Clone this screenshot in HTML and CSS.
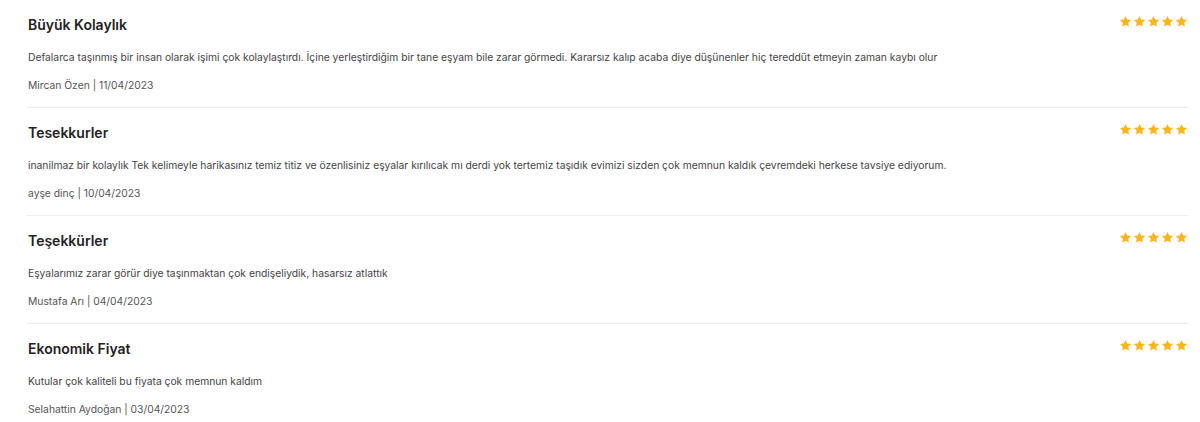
FILE: index.html
```html
<!DOCTYPE html>
<html lang="tr">

<head>
    <meta charset="UTF-8">
    <meta name="viewport" content="width=device-width, initial-scale=1.0">
    <title>Yorumlar</title>
    <link rel="stylesheet" href="styles.css">
</head>

<body>
    <div class="reviews">
        <div class="review">
            <div class="review-head">
                <h3>Büyük Kolaylık</h3>
                <div class="stars">
                    <svg viewBox="0 0 24 24"><path d="M12 1.8l3.1 6.6 7.2.9-5.3 5 1.4 7.1L12 17.9l-6.4 3.5 1.4-7.1-5.3-5 7.2-.9z"/></svg>
                    <svg viewBox="0 0 24 24"><path d="M12 1.8l3.1 6.6 7.2.9-5.3 5 1.4 7.1L12 17.9l-6.4 3.5 1.4-7.1-5.3-5 7.2-.9z"/></svg>
                    <svg viewBox="0 0 24 24"><path d="M12 1.8l3.1 6.6 7.2.9-5.3 5 1.4 7.1L12 17.9l-6.4 3.5 1.4-7.1-5.3-5 7.2-.9z"/></svg>
                    <svg viewBox="0 0 24 24"><path d="M12 1.8l3.1 6.6 7.2.9-5.3 5 1.4 7.1L12 17.9l-6.4 3.5 1.4-7.1-5.3-5 7.2-.9z"/></svg>
                    <svg viewBox="0 0 24 24"><path d="M12 1.8l3.1 6.6 7.2.9-5.3 5 1.4 7.1L12 17.9l-6.4 3.5 1.4-7.1-5.3-5 7.2-.9z"/></svg>
                </div>
            </div>
            <p class="review-text">Defalarca taşınmış bir insan olarak işimi çok kolaylaştırdı. İçine yerleştirdiğim bir tane eşyam bile zarar görmedi. Kararsız kalıp acaba diye düşünenler hiç tereddüt etmeyin zaman kaybı olur</p>
            <p class="review-meta">Mircan Özen | 11/04/2023</p>
        </div>

        <div class="review">
            <div class="review-head">
                <h3>Tesekkurler</h3>
                <div class="stars">
                    <svg viewBox="0 0 24 24"><path d="M12 1.8l3.1 6.6 7.2.9-5.3 5 1.4 7.1L12 17.9l-6.4 3.5 1.4-7.1-5.3-5 7.2-.9z"/></svg>
                    <svg viewBox="0 0 24 24"><path d="M12 1.8l3.1 6.6 7.2.9-5.3 5 1.4 7.1L12 17.9l-6.4 3.5 1.4-7.1-5.3-5 7.2-.9z"/></svg>
                    <svg viewBox="0 0 24 24"><path d="M12 1.8l3.1 6.6 7.2.9-5.3 5 1.4 7.1L12 17.9l-6.4 3.5 1.4-7.1-5.3-5 7.2-.9z"/></svg>
                    <svg viewBox="0 0 24 24"><path d="M12 1.8l3.1 6.6 7.2.9-5.3 5 1.4 7.1L12 17.9l-6.4 3.5 1.4-7.1-5.3-5 7.2-.9z"/></svg>
                    <svg viewBox="0 0 24 24"><path d="M12 1.8l3.1 6.6 7.2.9-5.3 5 1.4 7.1L12 17.9l-6.4 3.5 1.4-7.1-5.3-5 7.2-.9z"/></svg>
                </div>
            </div>
            <p class="review-text">inanilmaz bir kolaylık Tek kelimeyle harikasınız temiz titiz ve özenlisiniz eşyalar kırılıcak mı derdi yok tertemiz taşıdık evimizi sizden çok memnun kaldık çevremdeki herkese tavsiye ediyorum.</p>
            <p class="review-meta">ayşe dinç | 10/04/2023</p>
        </div>

        <div class="review">
            <div class="review-head">
                <h3>Teşekkürler</h3>
                <div class="stars">
                    <svg viewBox="0 0 24 24"><path d="M12 1.8l3.1 6.6 7.2.9-5.3 5 1.4 7.1L12 17.9l-6.4 3.5 1.4-7.1-5.3-5 7.2-.9z"/></svg>
                    <svg viewBox="0 0 24 24"><path d="M12 1.8l3.1 6.6 7.2.9-5.3 5 1.4 7.1L12 17.9l-6.4 3.5 1.4-7.1-5.3-5 7.2-.9z"/></svg>
                    <svg viewBox="0 0 24 24"><path d="M12 1.8l3.1 6.6 7.2.9-5.3 5 1.4 7.1L12 17.9l-6.4 3.5 1.4-7.1-5.3-5 7.2-.9z"/></svg>
                    <svg viewBox="0 0 24 24"><path d="M12 1.8l3.1 6.6 7.2.9-5.3 5 1.4 7.1L12 17.9l-6.4 3.5 1.4-7.1-5.3-5 7.2-.9z"/></svg>
                    <svg viewBox="0 0 24 24"><path d="M12 1.8l3.1 6.6 7.2.9-5.3 5 1.4 7.1L12 17.9l-6.4 3.5 1.4-7.1-5.3-5 7.2-.9z"/></svg>
                </div>
            </div>
            <p class="review-text">Eşyalarımız zarar görür diye taşınmaktan çok endişeliydik, hasarsız atlattık</p>
            <p class="review-meta">Mustafa Arı | 04/04/2023</p>
        </div>

        <div class="review">
            <div class="review-head">
                <h3>Ekonomik Fiyat</h3>
                <div class="stars">
                    <svg viewBox="0 0 24 24"><path d="M12 1.8l3.1 6.6 7.2.9-5.3 5 1.4 7.1L12 17.9l-6.4 3.5 1.4-7.1-5.3-5 7.2-.9z"/></svg>
                    <svg viewBox="0 0 24 24"><path d="M12 1.8l3.1 6.6 7.2.9-5.3 5 1.4 7.1L12 17.9l-6.4 3.5 1.4-7.1-5.3-5 7.2-.9z"/></svg>
                    <svg viewBox="0 0 24 24"><path d="M12 1.8l3.1 6.6 7.2.9-5.3 5 1.4 7.1L12 17.9l-6.4 3.5 1.4-7.1-5.3-5 7.2-.9z"/></svg>
                    <svg viewBox="0 0 24 24"><path d="M12 1.8l3.1 6.6 7.2.9-5.3 5 1.4 7.1L12 17.9l-6.4 3.5 1.4-7.1-5.3-5 7.2-.9z"/></svg>
                    <svg viewBox="0 0 24 24"><path d="M12 1.8l3.1 6.6 7.2.9-5.3 5 1.4 7.1L12 17.9l-6.4 3.5 1.4-7.1-5.3-5 7.2-.9z"/></svg>
                </div>
            </div>
            <p class="review-text">Kutular çok kaliteli bu fiyata çok memnun kaldım</p>
            <p class="review-meta">Selahattin Aydoğan | 03/04/2023</p>
        </div>
    </div>
</body>

</html>
```

FILE: styles.css
```css
body {
    margin: 0;
    padding: 0;
    background: #fff;
    font-family: Inter, "Noto Sans", sans-serif;
}

.reviews {
    margin: -1px 12px 0 27px;
}

.review {
    border-top: 1px solid #ececec;
    padding: 15px 0 12px 1px;
}

.review-head {
    display: flex;
    justify-content: space-between;
    align-items: flex-start;
}

.review-head h3 {
    margin: 0;
    font-size: 14px;
    line-height: 20px;
    font-weight: 600;
    color: #222;
}

.stars {
    display: flex;
    gap: 1px;
    margin-top: 0;
}

.stars svg {
    width: 13px;
    height: 13px;
    fill: #fdb515;
}

.review-text {
    margin: 12px 0 0;
    font-size: 10.3px;
    line-height: 20px;
    color: #444;
}

.review-meta {
    margin: 8px 0 0;
    font-size: 10.3px;
    line-height: 20px;
    color: #555;
}
```
